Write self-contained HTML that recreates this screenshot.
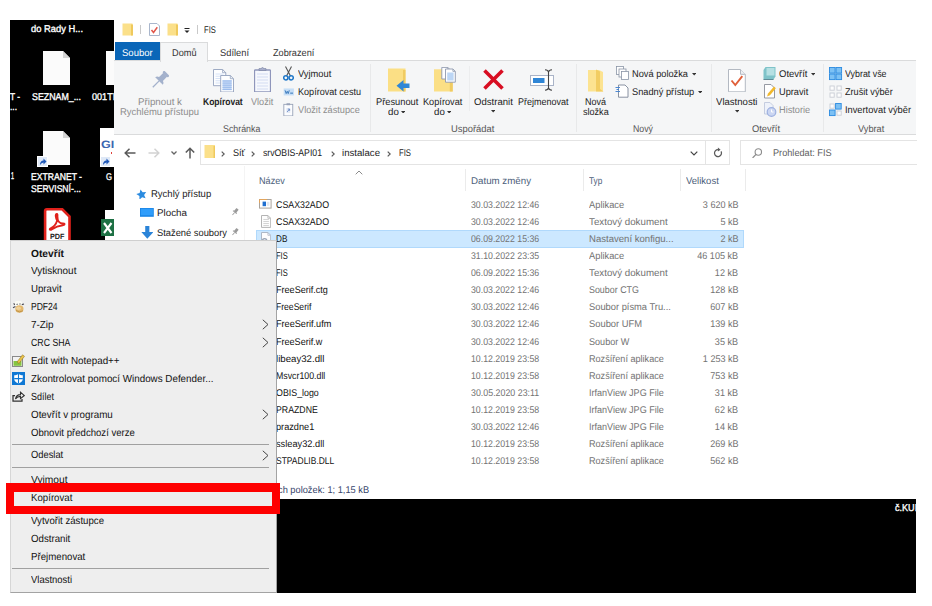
<!DOCTYPE html>
<html lang="cs"><head><meta charset="utf-8"><title>FIS</title>
<style>
html,body{margin:0;padding:0;background:#fff;}
body{width:932px;height:606px;position:relative;overflow:hidden;font-family:"Liberation Sans", sans-serif;text-rendering:geometricPrecision;}
#s{position:absolute;left:0;top:0;width:932px;height:606px;overflow:hidden;}
#s div,#s svg,#s span{position:absolute;}
#s span{white-space:nowrap;line-height:1;transform-origin:0 50%;}
#s span.r{transform-origin:100% 50%;}
</style></head><body><div id="s">
<div style="left:10px;top:20px;width:104px;height:222px;background:#000;"></div>
<svg style="left:43px;top:51px" width="27" height="34" viewBox="0 0 27 34"><path d="M0 0 H20 L27 7 V34 H0 Z" fill="#fbfbfb"/><path d="M20 0 V7 H27 Z" fill="#d4d4d4"/></svg>
<svg style="left:43px;top:131px" width="27" height="34" viewBox="0 0 27 34"><path d="M0 0 H20 L27 7 V34 H0 Z" fill="#fbfbfb"/><path d="M20 0 V7 H27 Z" fill="#d4d4d4"/></svg>
<div style="left:106px;top:51px;width:8px;height:34px;background:#fbfbfb;"></div>
<svg style="left:37px;top:156px" width="11" height="11" viewBox="0 0 11 11"><rect x="0" y="0" width="11" height="11" fill="#fff"/><rect x="1" y="1" width="9" height="9" fill="#dfe9f7"/><path d="M3 9 Q3 4.5 6.5 4.5 V2.5 L9.5 5.5 L6.5 8.5 V6.5 Q4.5 6.5 3 9Z" fill="#1d57b8"/></svg>
<div style="left:99.5px;top:128px;width:14.5px;height:38.5px;background:#fff;"></div>
<div style="left:110.8px;top:151.5px;width:1.6px;height:2.4px;background:#e0413a;"></div>
<svg style="left:99.5px;top:156px" width="11" height="11" viewBox="0 0 11 11"><rect x="0" y="0" width="11" height="11" fill="#fff"/><rect x="1" y="1" width="9" height="9" fill="#dfe9f7"/><path d="M3 9 Q3 4.5 6.5 4.5 V2.5 L9.5 5.5 L6.5 8.5 V6.5 Q4.5 6.5 3 9Z" fill="#1d57b8"/></svg>
<svg style="left:42.6px;top:208px" width="28.6" height="34" viewBox="0 0 27 34"><path d="M3 1.3 H18.5 L25.7 8.5 V34 H1.3 V3 Q1.3 1.3 3 1.3 Z" fill="#fff" stroke="#e0211b" stroke-width="2.6"/><path d="M13 6 C11.3 6 11.8 9.5 13.4 12.5 C12.3 16 9.3 19.3 6.8 20.3 C5.3 21 6 22.6 7.6 21.6 C10.5 19.6 13 17.8 19 17.2 C21.4 17.1 21.3 15.4 19 15.5 C16 15.5 13.8 13 13.6 9.4 C13.6 7.5 14 6 13 6Z" fill="none" stroke="#e0211b" stroke-width="1.9"/></svg>
<div style="left:105px;top:210px;width:9px;height:32px;background:#fff;"></div>
<div style="left:101px;top:218.5px;width:13px;height:17.5px;background:#1d7044;"></div>
<svg style="left:103px;top:221.5px" width="11" height="12" viewBox="0 0 11 12"><path d="M1 1 L8.5 11 M8.5 1 L1 11" stroke="#fff" stroke-width="2.1" fill="none"/></svg>
<span style="top:25px;font-size:9.8px;color:#fff;left:31.00px;transform:scaleX(0.9549);-webkit-text-stroke:0.35px #fff;">do Rady H...</span>
<span style="top:93px;font-size:9.8px;color:#fff;left:10.00px;transform:scaleX(0.8477);-webkit-text-stroke:0.35px #fff;">T -</span>
<span style="top:103px;font-size:9.8px;color:#fff;left:10.00px;transform:scaleX(0.8566);-webkit-text-stroke:0.35px #fff;">...</span>
<span style="top:93px;font-size:9.8px;color:#fff;left:32.00px;transform:scaleX(0.8999);-webkit-text-stroke:0.35px #fff;">SEZNAM_...</span>
<span style="top:93px;font-size:9.8px;color:#fff;left:92.00px;transform:scaleX(0.9257);-webkit-text-stroke:0.35px #fff;">001TI</span>
<span style="top:172px;font-size:9.8px;color:#fff;left:11.00px;transform:scaleX(0.5501);-webkit-text-stroke:0.35px #fff;">1</span>
<span style="top:173px;font-size:9.8px;color:#fff;left:31.00px;transform:scaleX(0.8781);-webkit-text-stroke:0.35px #fff;">EXTRANET -</span>
<span style="top:185px;font-size:9.8px;color:#fff;left:31.00px;transform:scaleX(0.8774);-webkit-text-stroke:0.35px #fff;">SERVISNÍ-...</span>
<span style="top:173px;font-size:9.8px;color:#fff;left:106.00px;transform:scaleX(0.7869);-webkit-text-stroke:0.35px #fff;">G</span>
<span style="top:140px;font-size:10.6px;color:#3b66b0;font-weight:700;left:101.30px;transform:scaleX(1.1888);">GI</span>
<span style="top:233px;font-size:7.6px;color:#222;font-weight:700;left:50.00px;transform:scaleX(0.9547);">PDF</span>
<div style="left:114px;top:20px;width:802px;height:478px;background:#fff;"></div>
<div style="left:276px;top:499px;width:640px;height:93.6px;background:#000;"></div>
<div style="left:114px;top:60.4px;width:802px;height:74.6px;background:#f5f6f7;border-top:1px solid #dadbdc;border-bottom:1px solid #dadbdc;box-sizing:border-box;"></div>
<div style="left:114.6px;top:41.7px;width:45.4px;height:18.8px;background:#0a66b8;"></div>
<div style="left:160px;top:42px;width:48px;height:19.6px;background:#f5f6f7;border:1px solid #dadbdc;border-bottom:none;box-sizing:border-box;"></div>
<div style="left:370px;top:64px;width:1px;height:68px;background:#e8e9ea;"></div>
<div style="left:575.5px;top:64px;width:1px;height:68px;background:#e8e9ea;"></div>
<div style="left:711px;top:64px;width:1px;height:68px;background:#e8e9ea;"></div>
<div style="left:823px;top:64px;width:1px;height:68px;background:#e8e9ea;"></div>
<div style="left:468.5px;top:66px;width:1px;height:45px;background:#ecedee;"></div>
<div style="left:200px;top:140px;width:530px;height:24.5px;background:#fff;border:1px solid #e4e4e4;box-sizing:border-box;"></div>
<div style="left:705px;top:140px;width:1px;height:24.5px;background:#e4e4e4;"></div>
<div style="left:740px;top:140px;width:177px;height:24.5px;background:#fff;border:1px solid #e4e4e4;border-right:none;box-sizing:border-box;"></div>
<div style="left:465px;top:169px;width:1px;height:22px;background:#ebebeb;"></div>
<div style="left:582.5px;top:169px;width:1px;height:22px;background:#ebebeb;"></div>
<div style="left:680px;top:169px;width:1px;height:22px;background:#ebebeb;"></div>
<div style="left:745px;top:169px;width:1px;height:22px;background:#ebebeb;"></div>
<div style="left:243.5px;top:166px;width:1px;height:74px;background:#f4f4f4;"></div>
<div style="left:255.5px;top:230px;width:488.5px;height:17.5px;background:#cce8ff;border:1px solid #b0d9fc;box-sizing:border-box;"></div>
<div style="left:139.5px;top:24.5px;width:1px;height:9.5px;background:#c9c9c9;"></div>
<div style="left:196.7px;top:24.5px;width:1px;height:9.5px;background:#c9c9c9;"></div>
<svg style="left:122px;top:22.5px" width="11" height="13" viewBox="0 0 11 12"><rect x="0.5" y="0" width="10" height="12" fill="#fbe08a"/><rect x="9" y="1" width="2" height="11" fill="#efc95c"/></svg>
<svg style="left:167px;top:22.5px" width="11" height="13" viewBox="0 0 11 12"><rect x="0.5" y="0" width="10" height="12" fill="#fbe08a"/><rect x="9" y="1" width="2" height="11" fill="#efc95c"/></svg>
<svg style="left:149px;top:23px" width="11" height="13" viewBox="0 0 11 13"><path d="M0.5 0.5 H8 L10.5 3 V12.5 H0.5 Z" fill="#fff" stroke="#a9b6cc"/><path d="M2.5 7 L4.5 9.5 L8.3 4.2" fill="none" stroke="#e2564a" stroke-width="1.5"/></svg>
<svg style="left:184px;top:28px" width="6" height="6" viewBox="0 0 6 6"><rect x="0.5" y="0" width="5" height="1" fill="#222"/><path d="M0.5 2.5 H5.5 L3 5 Z" fill="#222"/></svg>
<svg style="left:401.0px;top:110.8px" width="4.4" height="2.6" viewBox="0 0 4.4 2.6"><path d="M0 0 H4.4 L2.2 2.6 Z" fill="#333"/></svg>
<svg style="left:446.6px;top:110.8px" width="4.4" height="2.6" viewBox="0 0 4.4 2.6"><path d="M0 0 H4.4 L2.2 2.6 Z" fill="#333"/></svg>
<svg style="left:491.0px;top:110.0px" width="4.4" height="2.6" viewBox="0 0 4.4 2.6"><path d="M0 0 H4.4 L2.2 2.6 Z" fill="#333"/></svg>
<svg style="left:691.8px;top:73.3px" width="4.4" height="2.6" viewBox="0 0 4.4 2.6"><path d="M0 0 H4.4 L2.2 2.6 Z" fill="#333"/></svg>
<svg style="left:698.0px;top:90.8px" width="4.4" height="2.6" viewBox="0 0 4.4 2.6"><path d="M0 0 H4.4 L2.2 2.6 Z" fill="#333"/></svg>
<svg style="left:734.8px;top:110.0px" width="4.4" height="2.6" viewBox="0 0 4.4 2.6"><path d="M0 0 H4.4 L2.2 2.6 Z" fill="#333"/></svg>
<svg style="left:810.8px;top:73.3px" width="4.4" height="2.6" viewBox="0 0 4.4 2.6"><path d="M0 0 H4.4 L2.2 2.6 Z" fill="#333"/></svg>
<svg style="left:151px;top:71px" width="18" height="18" viewBox="0 0 18 18"><g transform="rotate(45 9 9)" fill="#a3b1cc"><rect x="5.2" y="-0.6" width="7.6" height="2.4" rx="0.8"/><rect x="6.3" y="1.5" width="5.4" height="6.8"/><path d="M3.6 10.4 Q4 8 6.3 7.6 H11.7 Q14 8 14.4 10.4 Z"/><rect x="8.35" y="10.2" width="1.3" height="9"/></g></svg>
<svg style="left:213px;top:68.5px" width="21.5" height="23.5" viewBox="0 0 21.5 23.5"><path d="M0.5 0.5 H9.600000000000001 L12.8 3.7 V16.7 H0.5 Z" fill="#fdfeff" stroke="#93a1bd" stroke-width="0.9"/><path d="M9.600000000000001 0.5 V3.7 H12.8" fill="none" stroke="#93a1bd" stroke-width="0.8"/><path d="M2.5 5.00 H10.5M2.5 7.25 H10.5M2.5 9.50 H10.5M2.5 11.75 H10.5M2.5 14.00 H10.5" stroke="#d6e2f6" stroke-width="1"/><path d="M7.7 6.5 H17.3 L20.5 9.7 V23.0 H7.7 Z" fill="#fdfeff" stroke="#93a1bd" stroke-width="0.9"/><path d="M17.3 6.5 V9.7 H20.5" fill="none" stroke="#93a1bd" stroke-width="0.8"/><rect x="9.5" y="11" width="9.2" height="10.2" fill="#c4d8f6"/><path d="M9.5 12.00 H18.7M9.5 14.12 H18.7M9.5 16.25 H18.7M9.5 18.38 H18.7M9.5 20.50 H18.7" stroke="#9dbcec" stroke-width="1"/></svg>
<svg style="left:254px;top:66.5px" width="17" height="25.5" viewBox="0 0 17 25.5"><rect x="0.5" y="3" width="16" height="22" rx="0.8" fill="#f6f8fd" stroke="#8f96bb" stroke-width="1.3"/><path d="M5 3.5 V1.6 H7 Q8.5 -0.6 10 1.6 H12 V3.5 Z" fill="#a9afcc" stroke="#8088a8" stroke-width="0.7"/><path d="M3 7.00 H14M3 10.00 H14M3 13.00 H14M3 16.00 H14M3 19.00 H14M3 22.00 H14" stroke="#d3dcf2" stroke-width="1"/></svg>
<svg style="left:283px;top:66px" width="11" height="15" viewBox="0 0 11 15"><path d="M2.5 0.5 L7.5 10 M8.5 0.5 L3.5 10" stroke="#555" stroke-width="1.1" fill="none"/><circle cx="2.8" cy="11.8" r="2.1" fill="none" stroke="#1f77c8" stroke-width="1.5"/><circle cx="8.2" cy="11.8" r="2.1" fill="none" stroke="#1f77c8" stroke-width="1.5"/></svg>
<svg style="left:281.8px;top:87.8px" width="13.6" height="8.4" viewBox="0 0 11 9"><rect x="0" y="0.5" width="11" height="7.5" fill="#c6def6"/><path d="M1.5 2.5 L2.7 6 L3.8 3.5 L4.9 6 L6 2.5" stroke="#2a6db5" stroke-width="0.9" fill="none"/><rect x="7" y="5" width="3" height="1" fill="#2a6db5"/></svg>
<svg style="left:283px;top:102.6px" width="10.6" height="13.4" viewBox="0 0 11 15"><rect x="0.5" y="1.5" width="10" height="13" fill="#fbfcfe" stroke="#97a2b8"/><rect x="3.5" y="0.3" width="4" height="2.2" fill="#97a2b8"/><rect x="3.3" y="5.6" width="4.4" height="5.6" fill="#e3e9f5"/><path d="M4.2 10 L6.8 7 M5 6.8 H7 V8.8" stroke="#5b7fc0" stroke-width="0.9" fill="none"/></svg>
<svg style="left:388px;top:68px" width="22" height="24" viewBox="0 0 22 24"><rect x="0" y="0.5" width="17.5" height="23" fill="#fbdf85"/><rect x="15" y="2" width="2.5" height="21.5" fill="#f0cb62"/><path d="M21.5 15.5 H15.5 V12 L8.5 17.7 L15.5 23.5 V20 H21.5 Z" fill="#2f86d6"/></svg>
<svg style="left:434px;top:67px" width="22" height="25" viewBox="0 0 22 25"><rect x="0" y="2.3" width="18.7" height="22.2" fill="#fbdf85"/><rect x="15.8" y="15" width="2.9" height="9.5" fill="#f0cb62"/><path d="M7.8 0.4 H13.8 L16.0 2.6 V12.0 H7.8 Z" fill="#fdfeff" stroke="#8e99ae" stroke-width="0.9"/><path d="M13.8 0.4 V2.6 H16.0" fill="none" stroke="#8e99ae" stroke-width="0.8"/><path d="M11.5 2 H18.900000000000002 L21.3 4.4 V15.2 H11.5 Z" fill="#fdfeff" stroke="#8e99ae" stroke-width="0.9"/><path d="M18.900000000000002 2 V4.4 H21.3" fill="none" stroke="#8e99ae" stroke-width="0.8"/><rect x="13.2" y="5.5" width="6.4" height="8" fill="#bcd6f5"/></svg>
<svg style="left:483px;top:69px" width="21" height="21" viewBox="0 0 21 21"><path d="M1.5 1.5 L19.5 19.5 M19.5 1.5 L1.5 19.5" stroke="#d80e22" stroke-width="3.6" fill="none"/></svg>
<svg style="left:530px;top:69px" width="26" height="22" viewBox="0 0 26 22"><rect x="0.5" y="6.5" width="23" height="10" fill="#fff" stroke="#aab4c8"/><rect x="3" y="9" width="11.5" height="5" fill="#2f86d6"/><path d="M15 0.8 Q18 1 18.5 3 Q19 1 22 0.8 M18.5 3 V19 M15 21.2 Q18 21 18.5 19 Q19 21 22 21.2" stroke="#444" stroke-width="1.1" fill="none"/></svg>
<svg style="left:587px;top:69px" width="17" height="23" viewBox="0 0 17 23"><path d="M1 1 H12 L16 3 V22.5 H1 Z" fill="#fce391"/><path d="M9 0.5 L13 2.5 V20 L16.5 22.5 H9 Z" fill="#f2cd62"/></svg>
<svg style="left:616px;top:66px" width="13" height="14" viewBox="0 0 13 14"><rect x="0.5" y="0.5" width="7" height="8" fill="#fff" stroke="#8a94a6" stroke-width="0.8"/><rect x="3" y="3" width="7" height="8" fill="#fff" stroke="#8a94a6" stroke-width="0.8"/><rect x="5.5" y="5.5" width="7" height="8" fill="#fff" stroke="#8a94a6" stroke-width="0.8"/></svg>
<svg style="left:615px;top:84px" width="14" height="14" viewBox="0 0 14 14"><path d="M3.5 1 H10 L13 4 V13.2 H3.5 Z" fill="#fff" stroke="#7d8797" stroke-width="0.9"/><path d="M0.5 3.5 H5 M1.5 5.5 H4 M0.5 7.5 H5" stroke="#3d7fd0" stroke-width="0.9"/></svg>
<svg style="left:728px;top:68.5px" width="18" height="23.5" viewBox="0 0 18 23.5"><path d="M0.5 0.5 H12.5 L17.3 5.3 V22.8 H0.5 Z" fill="#fff" stroke="#b3b9c2"/><path d="M12.5 0.5 V5.3 H17.3" fill="#eef0f3" stroke="#b3b9c2"/><path d="M3.5 11.5 L7.3 16 L14.3 7.2" fill="none" stroke="#e0603a" stroke-width="1.9"/></svg>
<svg style="left:763px;top:66px" width="13" height="14" viewBox="0 0 13 14"><path d="M2.5 1 H12.5 V10.5 L10.5 13.5 H0.5 V4 Z" fill="#7fc3c9"/><path d="M3.5 2 H11.5 V9.5 H3.5Z" fill="#b6e0e3"/><path d="M0.5 13.5 H10.5" stroke="#5f8b97"/></svg>
<svg style="left:763px;top:84px" width="13" height="15" viewBox="0 0 13 15"><path d="M1.5 0.5 H8 L11.5 4 V14 H1.5 Z" fill="#fff" stroke="#8a8f99" stroke-width="0.9"/><path d="M4 12.5 L5 9.5 L11 2.5 L12.8 4.2 L7 11.2 Z" fill="#f1b82c"/></svg>
<svg style="left:762px;top:102px" width="15" height="15" viewBox="0 0 15 15"><path d="M2.5 0.5 H8 L11 3.5 V12 H2.5 Z" fill="#eef2fa" stroke="#c0c8dd" stroke-width="0.9"/><circle cx="9.5" cy="10" r="4.3" fill="#cbd6f2" stroke="#9db0e0" stroke-width="1.2"/><path d="M9.5 7.5 V10 H11.5" stroke="#fff" fill="none"/></svg>
<svg style="left:829px;top:67px" width="13.5" height="13.5" viewBox="0 0 13.5 13.5"><rect x="0.5" y="0.5" width="5.6" height="5.6" fill="#7dc1f4" stroke="#2a8ae0" stroke-width="0.9"/><rect x="7" y="0.5" width="5.6" height="5.6" fill="#7dc1f4" stroke="#2a8ae0" stroke-width="0.9"/><rect x="0.5" y="7" width="5.6" height="5.6" fill="#7dc1f4" stroke="#2a8ae0" stroke-width="0.9"/><rect x="7" y="7" width="5.6" height="5.6" fill="#7dc1f4" stroke="#2a8ae0" stroke-width="0.9"/></svg>
<svg style="left:829px;top:85px" width="13.5" height="13.5" viewBox="0 0 13.5 13.5"><rect x="1" y="1" width="4.2" height="4.2" fill="#fdfdfd" stroke="#c9cdd4" stroke-width="0.9"/><rect x="8" y="1" width="4.2" height="4.2" fill="#fdfdfd" stroke="#c9cdd4" stroke-width="0.9"/><rect x="1" y="8" width="4.2" height="4.2" fill="#fdfdfd" stroke="#c9cdd4" stroke-width="0.9"/><rect x="8" y="8" width="4.2" height="4.2" fill="#fdfdfd" stroke="#c9cdd4" stroke-width="0.9"/></svg>
<svg style="left:829px;top:103px" width="13.5" height="13.5" viewBox="0 0 13.5 13.5"><rect x="1" y="1" width="4.2" height="4.2" fill="#fdfdfd" stroke="#c9cdd4" stroke-width="0.9"/><rect x="8" y="8" width="4.2" height="4.2" fill="#fdfdfd" stroke="#c9cdd4" stroke-width="0.9"/><rect x="6.6" y="0.5" width="5.6" height="5.6" fill="#7dc1f4" stroke="#2a8ae0" stroke-width="0.9"/><rect x="0.5" y="7" width="5.6" height="5.6" fill="#7dc1f4" stroke="#2a8ae0" stroke-width="0.9"/></svg>
<svg style="left:124px;top:148px" width="12" height="10" viewBox="0 0 12 10"><path d="M11.5 5 H1.5 M5.5 0.8 L1.2 5 L5.5 9.2" stroke="#5a5a5a" stroke-width="1.5" fill="none"/></svg>
<svg style="left:148px;top:148px" width="12" height="10" viewBox="0 0 12 10"><path d="M0.5 5 H10.5 M6.5 0.8 L10.8 5 L6.5 9.2" stroke="#d2d2d2" stroke-width="1.5" fill="none"/></svg>
<svg style="left:171px;top:151px" width="6" height="4" viewBox="0 0 6 4"><path d="M0.5 0.5 L3 3 L5.5 0.5" stroke="#666" stroke-width="1.3" fill="none"/></svg>
<svg style="left:185px;top:147px" width="10" height="12" viewBox="0 0 10 12"><path d="M5 11.5 V1.5 M0.8 5.5 L5 1.2 L9.2 5.5" stroke="#5a5a5a" stroke-width="1.5" fill="none"/></svg>
<svg style="left:204px;top:145px" width="11" height="13" viewBox="0 0 11 13"><rect x="0.5" y="0" width="11" height="13" fill="#fbe08a"/><rect x="9.5" y="1" width="2" height="12" fill="#efc95c"/></svg>
<svg style="left:221px;top:150.5px" width="4" height="6" viewBox="0 0 4 6"><path d="M0.7 0.6 L3.2 3 L0.7 5.4" stroke="#5a5a5a" stroke-width="1.25" fill="none"/></svg>
<svg style="left:251px;top:150.5px" width="4" height="6" viewBox="0 0 4 6"><path d="M0.7 0.6 L3.2 3 L0.7 5.4" stroke="#5a5a5a" stroke-width="1.25" fill="none"/></svg>
<svg style="left:331px;top:150.5px" width="4" height="6" viewBox="0 0 4 6"><path d="M0.7 0.6 L3.2 3 L0.7 5.4" stroke="#5a5a5a" stroke-width="1.25" fill="none"/></svg>
<svg style="left:387px;top:150.5px" width="4" height="6" viewBox="0 0 4 6"><path d="M0.7 0.6 L3.2 3 L0.7 5.4" stroke="#5a5a5a" stroke-width="1.25" fill="none"/></svg>
<svg style="left:689.7px;top:151px" width="8" height="5" viewBox="0 0 8 5"><path d="M0.7 0.7 L4 4 L7.3 0.7" stroke="#444" stroke-width="1.2" fill="none"/></svg>
<svg style="left:713px;top:147px" width="10" height="11" viewBox="0 0 10 11"><path d="M8.03 4.35 A3.5 3.5 0 1 1 5 2.6" stroke="#5a5a5a" stroke-width="1.25" fill="none"/><path d="M4.9 0.6 L7.6 2.7 L4.9 4.4 Z" fill="#5a5a5a"/></svg>
<svg style="left:752px;top:147.5px" width="10.5" height="10.5" viewBox="0 0 10.5 10.5"><circle cx="6.3" cy="4" r="3.2" stroke="#8c8c8c" stroke-width="1.1" fill="none"/><path d="M4 6.4 L0.6 9.9" stroke="#8c8c8c" stroke-width="1.3"/></svg>
<svg style="left:136px;top:188.6px" width="11" height="10.5" viewBox="0 0 11 11"><path transform="rotate(-12 5.5 5.5)" d="M5.5 0.3 L7.1 3.8 L10.8 4.2 L8 6.8 L8.8 10.6 L5.5 8.7 L2.2 10.6 L3 6.8 L0.2 4.2 L3.9 3.8 Z" fill="#2b8be0"/></svg>
<svg style="left:140.2px;top:208.3px" width="13.8" height="9" viewBox="0 0 13.8 9"><rect x="0" y="0" width="13.8" height="8.8" fill="#1b86e6"/><rect x="0.9" y="0.8" width="12" height="6.4" fill="#2f9dfb"/></svg>
<svg style="left:140.6px;top:225.6px" width="12.6" height="13.2" viewBox="0 0 13 14"><path d="M4.3 0 H8.7 V6.5 H12.8 L6.5 13.5 L0.2 6.5 H4.3 Z" fill="#2b84d8"/></svg>
<svg style="left:231px;top:208px" width="8" height="9" viewBox="0 0 8 9"><g transform="rotate(40 4 4)" fill="#9a9a9a"><rect x="2.6" y="0" width="2.8" height="4"/><rect x="1.6" y="3.6" width="4.8" height="1.1"/><rect x="3.6" y="4.5" width="0.8" height="3.5"/></g></svg>
<svg style="left:231px;top:228px" width="8" height="9" viewBox="0 0 8 9"><g transform="rotate(40 4 4)" fill="#9a9a9a"><rect x="2.6" y="0" width="2.8" height="4"/><rect x="1.6" y="3.6" width="4.8" height="1.1"/><rect x="3.6" y="4.5" width="0.8" height="3.5"/></g></svg>
<svg style="left:355px;top:169.8px" width="8" height="5" viewBox="0 0 8 5"><path d="M0.7 4.3 L4 1 L7.3 4.3" stroke="#8a8a8a" stroke-width="1" fill="none"/></svg>
<svg style="left:259.4px;top:199px" width="12.6" height="9.6" viewBox="0 0 12.6 9.6"><rect x="0.5" y="0.5" width="11.6" height="8.6" fill="#fff" stroke="#a9a39c"/><path d="M0.5 4 V0.5 H8" stroke="#e2a45c" fill="none"/><rect x="3.6" y="2.6" width="3.4" height="4.6" fill="#1f6fd0"/><rect x="7.8" y="2.8" width="2.6" height="4" fill="#dfe6f0"/></svg>
<svg style="left:260.6px;top:214.6px" width="10.4" height="13" viewBox="0 0 10.4 13"><path d="M0.5 0.5 H6.9 L9.7 3.3 V12.4 H0.5 Z" fill="#fdfdfd" stroke="#b4b4b4"/><path d="M6.9 0.5 V3.3 H9.7" fill="none" stroke="#b4b4b4" stroke-width="0.8"/><path d="M2.3 4.5 H7.9 M2.3 6.5 H7.9 M2.3 8.5 H7.9 M2.3 10.5 H7.9" stroke="#d4d4d4"/></svg>
<svg style="left:260.6px;top:232.2px" width="10.4" height="13" viewBox="0 0 10.4 13"><path d="M0.5 0.5 H6.9 L9.7 3.3 V12.4 H0.5 Z" fill="#fdfdfd" stroke="#aeb8c6"/><path d="M6.9 0.5 V3.3 H9.7" fill="none" stroke="#aeb8c6" stroke-width="0.8"/><circle cx="3.6" cy="8.8" r="2.2" fill="none" stroke="#9aa5b6" stroke-width="1.4"/></svg>
<span style="top:26px;font-size:9.8px;color:#1a1a1a;left:203.50px;transform:scaleX(0.7738);">FIS</span>
<span style="top:49px;font-size:9.8px;color:#fff;left:122.00px;transform:scaleX(0.9717);">Soubor</span>
<span style="top:49px;font-size:9.8px;color:#333;left:172.00px;transform:scaleX(0.9372);">Domů</span>
<span style="top:49px;font-size:9.8px;color:#333;left:220.00px;transform:scaleX(0.9503);">Sdílení</span>
<span style="top:49px;font-size:9.8px;color:#333;left:272.70px;transform:scaleX(0.9360);">Zobrazení</span>
<span style="top:98px;font-size:9.8px;color:#8d8d8d;left:138.00px;transform:scaleX(0.9972);">Připnout k</span>
<span style="top:108px;font-size:9.8px;color:#8d8d8d;left:120.00px;transform:scaleX(0.9671);">Rychlému přístupu</span>
<span style="top:98px;font-size:9.8px;color:#222;font-weight:700;left:203.00px;transform:scaleX(0.8681);">Kopírovat</span>
<span style="top:98px;font-size:9.8px;color:#8d8d8d;left:250.70px;transform:scaleX(0.9304);">Vložit</span>
<span style="top:70px;font-size:9.8px;color:#222;left:297.70px;transform:scaleX(0.9506);">Vyjmout</span>
<span style="top:88px;font-size:9.8px;color:#222;left:297.70px;transform:scaleX(0.9254);">Kopírovat cestu</span>
<span style="top:106px;font-size:9.8px;color:#8d8d8d;left:297.70px;transform:scaleX(0.9379);">Vložit zástupce</span>
<span style="top:125px;font-size:9.8px;color:#555;left:222.70px;transform:scaleX(0.9012);">Schránka</span>
<span style="top:98px;font-size:9.8px;color:#222;left:375.70px;transform:scaleX(0.9469);">Přesunout</span>
<span style="top:108px;font-size:9.8px;color:#222;left:388.20px;transform:scaleX(0.9903);">do</span>
<span style="top:98px;font-size:9.8px;color:#222;left:422.70px;transform:scaleX(0.9371);">Kopírovat</span>
<span style="top:108px;font-size:9.8px;color:#222;left:433.70px;transform:scaleX(0.9903);">do</span>
<span style="top:98px;font-size:9.8px;color:#222;left:473.70px;transform:scaleX(0.9761);">Odstranit</span>
<span style="top:98px;font-size:9.8px;color:#222;left:517.50px;transform:scaleX(0.9182);">Přejmenovat</span>
<span style="top:125px;font-size:9.8px;color:#555;left:450.70px;transform:scaleX(0.9579);">Uspořádat</span>
<span style="top:98px;font-size:9.8px;color:#222;left:585.00px;transform:scaleX(0.9180);">Nová</span>
<span style="top:108px;font-size:9.8px;color:#222;left:583.00px;transform:scaleX(0.9251);">složka</span>
<span style="top:70px;font-size:9.8px;color:#222;left:632.00px;transform:scaleX(0.9432);">Nová položka</span>
<span style="top:88px;font-size:9.8px;color:#222;left:632.00px;transform:scaleX(0.9438);">Snadný přístup</span>
<span style="top:125px;font-size:9.8px;color:#555;left:632.50px;transform:scaleX(0.8957);">Nový</span>
<span style="top:98px;font-size:9.8px;color:#222;left:716.00px;transform:scaleX(0.9768);">Vlastnosti</span>
<span style="top:70px;font-size:9.8px;color:#222;left:778.50px;transform:scaleX(0.9692);">Otevřít</span>
<span style="top:88px;font-size:9.8px;color:#222;left:778.50px;transform:scaleX(0.9405);">Upravit</span>
<span style="top:106px;font-size:9.8px;color:#8d8d8d;left:778.50px;transform:scaleX(0.9392);">Historie</span>
<span style="top:125px;font-size:9.8px;color:#555;left:752.00px;transform:scaleX(0.9522);">Otevřít</span>
<span style="top:70px;font-size:9.8px;color:#222;left:845.00px;transform:scaleX(0.9037);">Vybrat vše</span>
<span style="top:88px;font-size:9.8px;color:#222;left:845.00px;transform:scaleX(0.9322);">Zrušit výběr</span>
<span style="top:106px;font-size:9.8px;color:#222;left:845.00px;transform:scaleX(0.9469);">Invertovat výběr</span>
<span style="top:125px;font-size:9.8px;color:#555;left:857.70px;transform:scaleX(0.9409);">Vybrat</span>
<span style="top:149px;font-size:9.8px;color:#1a1a1a;left:233.00px;transform:scaleX(0.9275);">Síť</span>
<span style="top:149px;font-size:9.8px;color:#1a1a1a;left:263.00px;transform:scaleX(0.8883);">srvOBIS-API01</span>
<span style="top:149px;font-size:9.8px;color:#1a1a1a;left:342.00px;transform:scaleX(0.9826);">instalace</span>
<span style="top:149px;font-size:9.8px;color:#1a1a1a;left:399.00px;transform:scaleX(0.7869);">FIS</span>
<span style="top:149px;font-size:9.8px;color:#5e5e5e;left:773.00px;transform:scaleX(0.9357);">Prohledat: FIS</span>
<span style="top:190px;font-size:9.8px;color:#1a1a1a;left:150.80px;transform:scaleX(0.9697);">Rychlý přístup</span>
<span style="top:209px;font-size:9.8px;color:#1a1a1a;left:157.00px;transform:scaleX(1.0010);">Plocha</span>
<span style="top:229px;font-size:9.8px;color:#1a1a1a;left:157.00px;transform:scaleX(0.9520);">Stažené soubory</span>
<span style="top:177px;font-size:9.8px;color:#4c607a;left:258.70px;transform:scaleX(0.9287);">Název</span>
<span style="top:177px;font-size:9.8px;color:#4c607a;left:470.50px;transform:scaleX(0.9928);">Datum změny</span>
<span style="top:177px;font-size:9.8px;color:#4c607a;left:588.70px;transform:scaleX(0.8419);">Typ</span>
<span style="top:177px;font-size:9.8px;color:#4c607a;left:685.70px;transform:scaleX(0.9714);">Velikost</span>
<span style="top:201px;font-size:9.8px;color:#111;left:275.70px;transform:scaleX(0.9012);">CSAX32ADO</span>
<span style="top:201px;font-size:9.8px;color:#727272;left:470.50px;transform:scaleX(0.8941);">30.03.2022 12:46</span>
<span style="top:201px;font-size:9.8px;color:#727272;left:588.70px;transform:scaleX(0.9505);">Aplikace</span>
<span class="r" style="top:201px;font-size:9.8px;color:#727272;right:193.60px;transform:scaleX(0.9268);">3 620 kB</span>
<span style="top:218px;font-size:9.8px;color:#111;left:275.70px;transform:scaleX(0.9012);">CSAX32ADO</span>
<span style="top:218px;font-size:9.8px;color:#727272;left:470.50px;transform:scaleX(0.8941);">30.03.2022 12:46</span>
<span style="top:218px;font-size:9.8px;color:#727272;left:588.70px;transform:scaleX(0.9953);">Textový dokument</span>
<span class="r" style="top:218px;font-size:9.8px;color:#727272;right:193.60px;transform:scaleX(0.9268);">5 kB</span>
<span style="top:235px;font-size:9.8px;color:#111;left:275.70px;transform:scaleX(0.8367);">DB</span>
<span style="top:235px;font-size:9.8px;color:#727272;left:470.50px;transform:scaleX(0.8941);">06.09.2022 15:36</span>
<span style="top:235px;font-size:9.8px;color:#727272;left:588.70px;transform:scaleX(0.9770);">Nastavení konfigu...</span>
<span class="r" style="top:235px;font-size:9.8px;color:#727272;right:193.60px;transform:scaleX(0.9268);">2 kB</span>
<span style="top:252px;font-size:9.8px;color:#111;left:275.70px;transform:scaleX(0.7672);">FIS</span>
<span style="top:252px;font-size:9.8px;color:#727272;left:470.50px;transform:scaleX(0.8941);">31.10.2022 23:35</span>
<span style="top:252px;font-size:9.8px;color:#727272;left:588.70px;transform:scaleX(0.9505);">Aplikace</span>
<span class="r" style="top:252px;font-size:9.8px;color:#727272;right:193.60px;transform:scaleX(0.9268);">46 105 kB</span>
<span style="top:269px;font-size:9.8px;color:#111;left:275.70px;transform:scaleX(0.7672);">FIS</span>
<span style="top:269px;font-size:9.8px;color:#727272;left:470.50px;transform:scaleX(0.8941);">06.09.2022 15:36</span>
<span style="top:269px;font-size:9.8px;color:#727272;left:588.70px;transform:scaleX(0.9953);">Textový dokument</span>
<span class="r" style="top:269px;font-size:9.8px;color:#727272;right:193.60px;transform:scaleX(0.9268);">12 kB</span>
<span style="top:286px;font-size:9.8px;color:#111;left:275.70px;transform:scaleX(0.9252);">FreeSerif.ctg</span>
<span style="top:286px;font-size:9.8px;color:#727272;left:470.50px;transform:scaleX(0.8941);">30.03.2022 12:46</span>
<span style="top:286px;font-size:9.8px;color:#727272;left:588.70px;transform:scaleX(0.9073);">Soubor CTG</span>
<span class="r" style="top:286px;font-size:9.8px;color:#727272;right:193.60px;transform:scaleX(0.9268);">128 kB</span>
<span style="top:303px;font-size:9.8px;color:#111;left:275.70px;transform:scaleX(0.8760);">FreeSerif</span>
<span style="top:303px;font-size:9.8px;color:#727272;left:470.50px;transform:scaleX(0.8941);">30.03.2022 12:46</span>
<span style="top:303px;font-size:9.8px;color:#727272;left:588.70px;transform:scaleX(0.9518);">Soubor písma Tru...</span>
<span class="r" style="top:303px;font-size:9.8px;color:#727272;right:193.60px;transform:scaleX(0.9268);">607 kB</span>
<span style="top:320px;font-size:9.8px;color:#111;left:275.70px;transform:scaleX(0.9319);">FreeSerif.ufm</span>
<span style="top:320px;font-size:9.8px;color:#727272;left:470.50px;transform:scaleX(0.8941);">30.03.2022 12:46</span>
<span style="top:320px;font-size:9.8px;color:#727272;left:588.70px;transform:scaleX(0.9559);">Soubor UFM</span>
<span class="r" style="top:320px;font-size:9.8px;color:#727272;right:193.60px;transform:scaleX(0.9268);">139 kB</span>
<span style="top:338px;font-size:9.8px;color:#111;left:275.70px;transform:scaleX(0.9243);">FreeSerif.w</span>
<span style="top:338px;font-size:9.8px;color:#727272;left:470.50px;transform:scaleX(0.8941);">30.03.2022 12:46</span>
<span style="top:338px;font-size:9.8px;color:#727272;left:588.70px;transform:scaleX(0.9268);">Soubor W</span>
<span class="r" style="top:338px;font-size:9.8px;color:#727272;right:193.60px;transform:scaleX(0.9268);">35 kB</span>
<span style="top:355px;font-size:9.8px;color:#111;left:275.70px;transform:scaleX(0.9851);">libeay32.dll</span>
<span style="top:355px;font-size:9.8px;color:#727272;left:470.50px;transform:scaleX(0.8941);">10.12.2019 23:58</span>
<span style="top:355px;font-size:9.8px;color:#727272;left:588.70px;transform:scaleX(0.9281);">Rozšíření aplikace</span>
<span class="r" style="top:355px;font-size:9.8px;color:#727272;right:193.60px;transform:scaleX(0.9268);">1 253 kB</span>
<span style="top:372px;font-size:9.8px;color:#111;left:275.70px;transform:scaleX(0.8964);">Msvcr100.dll</span>
<span style="top:372px;font-size:9.8px;color:#727272;left:470.50px;transform:scaleX(0.8941);">10.12.2019 23:58</span>
<span style="top:372px;font-size:9.8px;color:#727272;left:588.70px;transform:scaleX(0.9281);">Rozšíření aplikace</span>
<span class="r" style="top:372px;font-size:9.8px;color:#727272;right:193.60px;transform:scaleX(0.9268);">753 kB</span>
<span style="top:389px;font-size:9.8px;color:#111;left:275.70px;transform:scaleX(0.9031);">OBIS_logo</span>
<span style="top:389px;font-size:9.8px;color:#727272;left:470.50px;transform:scaleX(0.9028);">30.05.2020 23:11</span>
<span style="top:389px;font-size:9.8px;color:#727272;left:588.70px;transform:scaleX(0.9240);">IrfanView JPG File</span>
<span class="r" style="top:389px;font-size:9.8px;color:#727272;right:193.60px;transform:scaleX(0.9268);">31 kB</span>
<span style="top:406px;font-size:9.8px;color:#111;left:275.70px;transform:scaleX(0.8926);">PRAZDNE</span>
<span style="top:406px;font-size:9.8px;color:#727272;left:470.50px;transform:scaleX(0.8941);">10.12.2019 23:58</span>
<span style="top:406px;font-size:9.8px;color:#727272;left:588.70px;transform:scaleX(0.9240);">IrfanView JPG File</span>
<span class="r" style="top:406px;font-size:9.8px;color:#727272;right:193.60px;transform:scaleX(0.9268);">62 kB</span>
<span style="top:423px;font-size:9.8px;color:#111;left:275.70px;transform:scaleX(0.9374);">prazdne1</span>
<span style="top:423px;font-size:9.8px;color:#727272;left:470.50px;transform:scaleX(0.8941);">30.03.2022 12:46</span>
<span style="top:423px;font-size:9.8px;color:#727272;left:588.70px;transform:scaleX(0.9240);">IrfanView JPG File</span>
<span class="r" style="top:423px;font-size:9.8px;color:#727272;right:193.60px;transform:scaleX(0.9268);">14 kB</span>
<span style="top:440px;font-size:9.8px;color:#111;left:275.70px;transform:scaleX(0.9433);">ssleay32.dll</span>
<span style="top:440px;font-size:9.8px;color:#727272;left:470.50px;transform:scaleX(0.8941);">10.12.2019 23:58</span>
<span style="top:440px;font-size:9.8px;color:#727272;left:588.70px;transform:scaleX(0.9281);">Rozšíření aplikace</span>
<span class="r" style="top:440px;font-size:9.8px;color:#727272;right:193.60px;transform:scaleX(0.9268);">269 kB</span>
<span style="top:457px;font-size:9.8px;color:#111;left:275.70px;transform:scaleX(0.8657);">STPADLIB.DLL</span>
<span style="top:457px;font-size:9.8px;color:#727272;left:470.50px;transform:scaleX(0.8941);">10.12.2019 23:58</span>
<span style="top:457px;font-size:9.8px;color:#727272;left:588.70px;transform:scaleX(0.9281);">Rozšíření aplikace</span>
<span class="r" style="top:457px;font-size:9.8px;color:#727272;right:193.60px;transform:scaleX(0.9268);">562 kB</span>
<span style="top:486px;font-size:9.8px;color:#36456b;left:278.00px;transform:scaleX(0.9450);">ch položek: 1; 1,15 kB</span>
<div style="left:9.9px;top:239.5px;width:266.7px;height:353px;background:#eeeeee;border:1px solid #a3a3a3;border-top-color:#cfcfcf;border-left-color:#d6d6d6;box-sizing:border-box;"></div>
<div style="left:916px;top:498px;width:16px;height:96px;background:#fff;"></div>
<span style="top:504px;font-size:9.8px;color:#fff;left:894.80px;transform:scaleX(0.9268);-webkit-text-stroke:0.35px #fff;">č.KUI</span>
<div style="left:11.6px;top:443.7px;width:257px;height:1px;background:#a0a0a0;"></div>
<div style="left:11.6px;top:466.8px;width:257px;height:1px;background:#a0a0a0;"></div>
<div style="left:11.6px;top:508.3px;width:257px;height:1px;background:#a0a0a0;"></div>
<div style="left:11.6px;top:567.8px;width:257px;height:1px;background:#a0a0a0;"></div>
<svg style="left:261.5px;top:319.2px" width="7" height="11" viewBox="0 0 7 11"><path d="M0.8 0.8 L6 5.5 L0.8 10.2" stroke="#444" stroke-width="1" fill="none"/></svg>
<svg style="left:261.5px;top:337.0px" width="7" height="11" viewBox="0 0 7 11"><path d="M0.8 0.8 L6 5.5 L0.8 10.2" stroke="#444" stroke-width="1" fill="none"/></svg>
<svg style="left:261.5px;top:408.8px" width="7" height="11" viewBox="0 0 7 11"><path d="M0.8 0.8 L6 5.5 L0.8 10.2" stroke="#444" stroke-width="1" fill="none"/></svg>
<svg style="left:261.5px;top:449.5px" width="7" height="11" viewBox="0 0 7 11"><path d="M0.8 0.8 L6 5.5 L0.8 10.2" stroke="#444" stroke-width="1" fill="none"/></svg>
<svg style="left:12px;top:300px" width="13.5" height="13.5" viewBox="0 0 13.5 13.5"><ellipse cx="6.3" cy="3.8" rx="4" ry="3" fill="#fbfbf4"/><ellipse cx="7.4" cy="9" rx="4.1" ry="3.7" fill="#e3b76c"/><ellipse cx="6.6" cy="8.2" rx="2.4" ry="1.8" fill="#f0d29a"/><path d="M1 7.8 L3.4 6.6 M1.8 3.2 L2.6 5 M9.8 4.6 L12 4 M4.6 4.6 L5.6 4 M7.6 4.4 L8.4 3.6" stroke="#4a4a52" stroke-width="1.1"/><path d="M4 10.5 Q7.4 13.2 11 10.8" stroke="#b88a3e" stroke-width="0.8" fill="none"/></svg>
<svg style="left:12px;top:354px" width="13" height="13" viewBox="0 0 13 13"><rect x="0.5" y="2.5" width="10" height="10" fill="#f3f3f3" stroke="#8a8a8a"/><rect x="1.5" y="7" width="8" height="4.8" fill="#86c540"/><path d="M5 8 L10.5 0.8 L12.5 2.3 L7 9.5 Z" fill="#e8c24a" stroke="#8a6d1c" stroke-width="0.5"/></svg>
<svg style="left:12px;top:372px" width="13" height="13" viewBox="0 0 13 13"><rect x="0" y="0" width="13" height="13" fill="#0f78d4"/><path d="M6.5 2 C8 3 9.5 3.2 10.8 3.2 V7 C10.8 9.3 8.8 10.8 6.5 11.6 C4.2 10.8 2.2 9.3 2.2 7 V3.2 C3.5 3.2 5 3 6.5 2Z" fill="#fff"/><path d="M6.5 2 V11.6 M2.2 6.6 H10.8" stroke="#0f78d4" stroke-width="1.1"/></svg>
<svg style="left:12px;top:390.5px" width="13" height="11" viewBox="0 0 13 11"><path d="M3 4.5 H1 V10.2 H10 V8" stroke="#333" stroke-width="1.25" fill="none"/><path d="M3.5 8 C4 5 6 3.6 8.5 3.6 V1.2 L12.3 4.5 L8.5 7.6 V5.4 C6.5 5.4 5 6 3.5 8Z" stroke="#333" stroke-width="1.1" fill="none"/></svg>
<span style="top:250px;font-size:10.3px;color:#111;font-weight:700;left:31.40px;transform:scaleX(0.9909);">Otevřít</span>
<span style="top:267px;font-size:10.3px;color:#111;left:31.40px;transform:scaleX(0.9634);">Vytisknout</span>
<span style="top:285px;font-size:10.3px;color:#111;left:31.40px;transform:scaleX(0.9379);">Upravit</span>
<span style="top:303px;font-size:10.3px;color:#111;left:31.40px;transform:scaleX(0.8296);">PDF24</span>
<span style="top:321px;font-size:10.3px;color:#111;left:31.40px;transform:scaleX(0.9630);">7-Zip</span>
<span style="top:339px;font-size:10.3px;color:#111;left:31.40px;transform:scaleX(0.8502);">CRC SHA</span>
<span style="top:357px;font-size:10.3px;color:#111;left:31.40px;transform:scaleX(0.9554);">Edit with Notepad++</span>
<span style="top:375px;font-size:10.3px;color:#111;left:31.40px;transform:scaleX(0.9542);">Zkontrolovat pomocí Windows Defender...</span>
<span style="top:393px;font-size:10.3px;color:#111;left:31.40px;transform:scaleX(0.8769);">Sdílet</span>
<span style="top:411px;font-size:10.3px;color:#111;left:31.40px;transform:scaleX(0.9529);">Otevřít v programu</span>
<span style="top:429px;font-size:10.3px;color:#111;left:31.40px;transform:scaleX(0.9309);">Obnovit předchozí verze</span>
<span style="top:451px;font-size:10.3px;color:#111;left:31.40px;transform:scaleX(0.9070);">Odeslat</span>
<span style="top:476px;font-size:10.3px;color:#111;left:31.40px;transform:scaleX(0.9938);">Vyjmout</span>
<span style="top:494px;font-size:10.3px;color:#111;left:31.40px;transform:scaleX(0.9392);">Kopírovat</span>
<span style="top:517px;font-size:10.3px;color:#111;left:31.40px;transform:scaleX(0.9355);">Vytvořit zástupce</span>
<span style="top:535px;font-size:10.3px;color:#111;left:31.40px;transform:scaleX(0.9406);">Odstranit</span>
<span style="top:553px;font-size:10.3px;color:#111;left:31.40px;transform:scaleX(0.9392);">Přejmenovat</span>
<span style="top:576px;font-size:10.3px;color:#111;left:31.40px;transform:scaleX(0.9181);">Vlastnosti</span>
<div style="left:6.2px;top:483.1px;width:273.6px;height:31.4px;background:transparent;border:8.7px solid #fe0000;border-top-width:9px;box-sizing:border-box;"></div>
</div></body></html>
